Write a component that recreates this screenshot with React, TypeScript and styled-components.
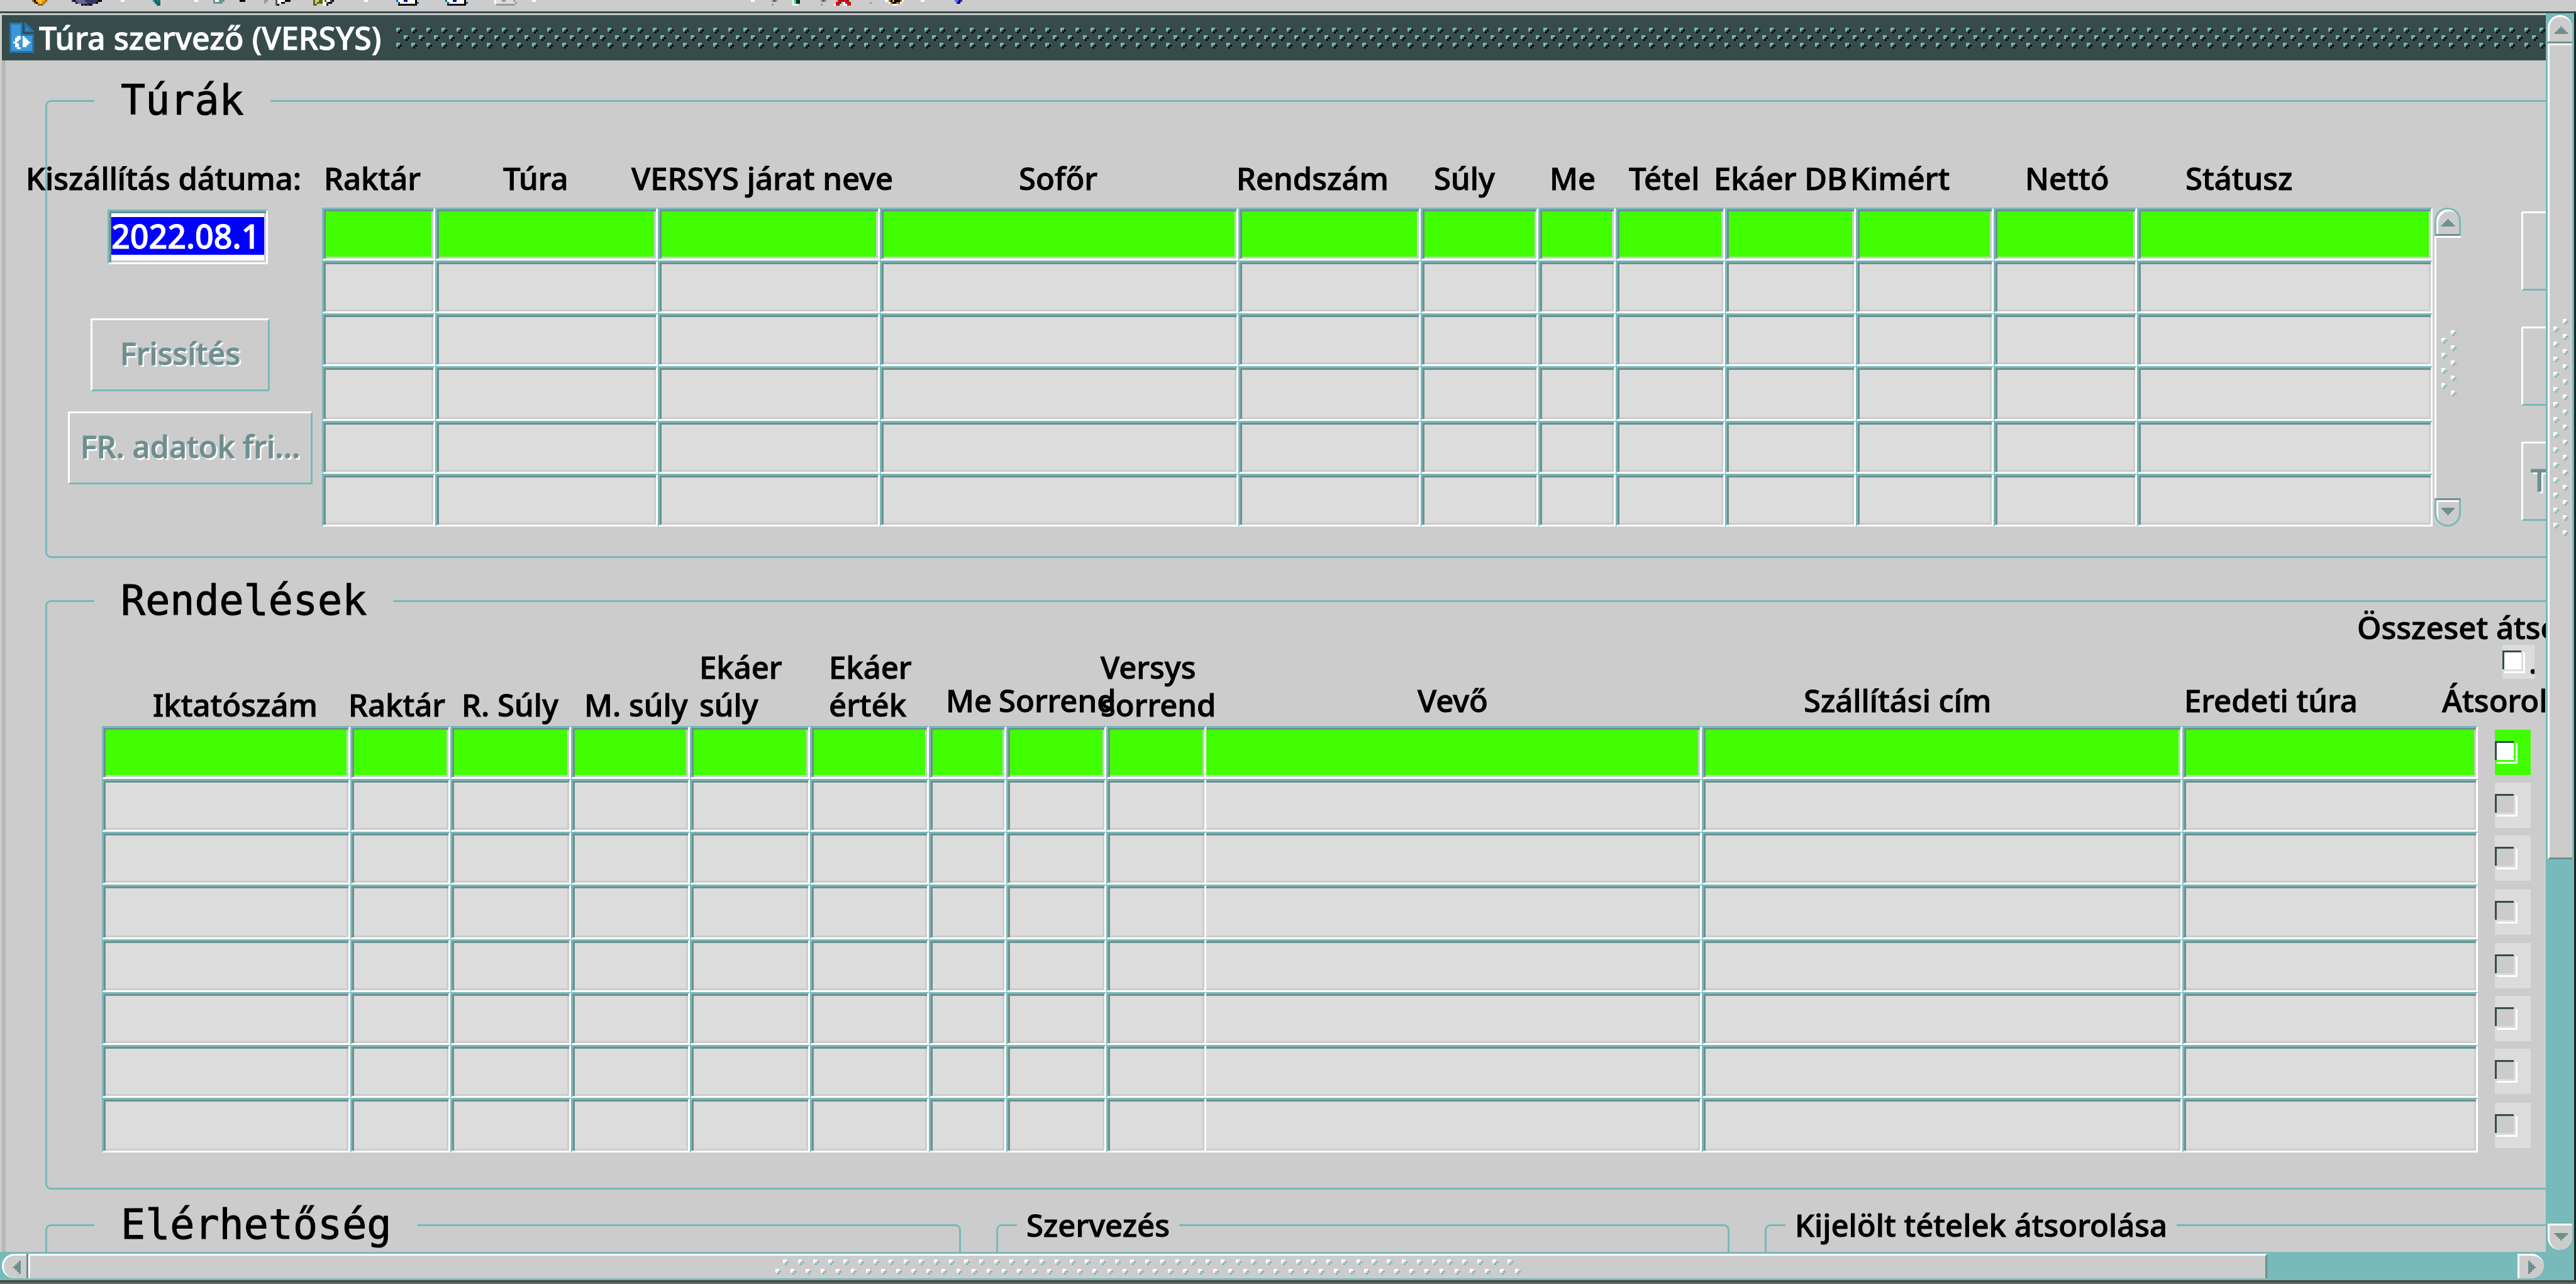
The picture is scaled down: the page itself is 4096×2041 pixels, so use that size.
import React from "react";
import styled, { createGlobalStyle, css } from "styled-components";

const c = {
  face: "#cccccc",
  field: "#dcdcdc",
  teal: "#78b9b9",
  slate: "#6f8f8f",
  dark: "#374b4b",
  active: "#41ff00",
  edge: "#b7b7b7",
  select: "#0000ff",
};

const sans = `"Noto Sans", "Open Sans", sans-serif`;
const mono = `"DejaVu Sans Mono", monospace`;

const GlobalStyle = createGlobalStyle`
  *, *::before, *::after { box-sizing: border-box; }
  html, body { margin: 0; height: 100%; background: ${c.face}; overflow: hidden; }
  body { font: 500 49px/60px ${sans}; color: #000; -webkit-text-stroke: 1px; }
  button, input { font: inherit; color: inherit; margin: 0; padding: 0; border-radius: 0; }
`;

/* ---------- pixel drawings ---------- */

const palette: Record<string, string> = {
  k: "#000000", w: "#ffffff", o: "#ff9900", y: "#ffcc66", b: "#996600",
  p: "#666699", n: "#333366", t: "#006666", T: "#669999", g: "#999999",
  d: "#555555", l: "#cccc99", m: "#666600", N: "#000099", B: "#006699",
  G: "#00ee33", e: "#003333", r: "#ff0000", R: "#cc0033", u: "#663300",
  v: "#6666ff", s: "#dddddd", c: "#009999",
};

function Sprite({ rows }: { rows: string[] }) {
  const w = Math.max(...rows.map((r) => r.length));
  return (
    <svg width={w * 3} height={rows.length * 3} viewBox={`0 0 ${w} ${rows.length}`} shapeRendering="crispEdges" aria-hidden="true">
      {rows.map((row, y) =>
        row.split("").map((ch, x) =>
          ch === "." ? null : <rect key={`${x}-${y}`} x={x} y={y} width="1" height="1" fill={palette[ch]} />
        )
      )}
    </svg>
  );
}

function Dot({ x, y, light, dark }: { x: number; y: number; light: string; dark: string }) {
  return (
    <g>
      <path d={`M${x} ${y}h6v3h-3v3h-3z`} fill={light} />
      <path d={`M${x + 6} ${y + 3}h3v3h-3zM${x + 3} ${y + 6}h3v3h-3z`} fill={dark} />
    </g>
  );
}

function VerticalGrip({ count }: { count: number }) {
  return (
    <svg width="24" height={count * 24 - 15} shapeRendering="crispEdges" aria-hidden="true">
      {Array.from({ length: count }, (_, i) => (
        <Dot key={`r${i}`} x={15} y={i * 24} light="#fff" dark={c.teal} />
      ))}
      {Array.from({ length: count - 1 }, (_, i) => (
        <Dot key={`l${i}`} x={0} y={12 + i * 24} light="#fff" dark={c.teal} />
      ))}
    </svg>
  );
}

function HorizontalGrip({ count }: { count: number }) {
  return (
    <svg width={count * 24 - 15} height="24" shapeRendering="crispEdges" aria-hidden="true">
      {Array.from({ length: count }, (_, i) => (
        <Dot key={`b${i}`} x={i * 24} y={15} light="#fff" dark={c.teal} />
      ))}
      {Array.from({ length: count - 1 }, (_, i) => (
        <Dot key={`t${i}`} x={12 + i * 24} y={0} light="#fff" dark={c.teal} />
      ))}
    </svg>
  );
}

const arrows = {
  up: { w: 21, h: 12, d: "M9 0h3v3h3v3h3v3h3v3h-21v-3h3v-3h3v-3h3z" },
  down: { w: 21, h: 12, d: "M0 0h21v3h-3v3h-3v3h-3v3h-3v-3h-3v-3h-3v-3h-3z" },
  left: { w: 12, h: 21, d: "M12 0v21h-3v-3h-3v-3h-3v-3h-3v-3h3v-3h3v-3h3v-3z" },
  right: { w: 12, h: 21, d: "M0 0v21h3v-3h3v-3h3v-3h3v-3h-3v-3h-3v-3h-3v-3z" },
};

function Arrow({ dir }: { dir: keyof typeof arrows }) {
  const a = arrows[dir];
  return (
    <svg width={a.w} height={a.h} shapeRendering="crispEdges" aria-hidden="true">
      <path d={a.d} fill={c.slate} />
    </svg>
  );
}

/* ---------- window frame ---------- */

const Window = styled.div`
  display: flex;
  flex-direction: column;
  height: 100vh;
  overflow: hidden;
  background: ${c.face};
`;

const Toolbar = styled.div`
  display: flex;
  flex: none;
  align-items: flex-start;
  height: 21px;
  padding-left: 51px;
  border-bottom: 3px solid ${c.dark};
`;

const Tool = styled.button<{ $gap: number }>`
  display: flex;
  flex: none;
  margin-left: ${(p) => p.$gap}px;
  border: 0;
  background: none;
`;

const Middle = styled.div`
  display: flex;
  flex: 1;
  min-height: 0;
`;

const Main = styled.div`
  display: flex;
  flex: 1;
  flex-direction: column;
  min-width: 0;
`;

const TitleBar = styled.header`
  display: flex;
  flex: none;
  align-items: center;
  height: 75px;
  padding-left: 12px;
  margin-left: 3px;
  border-top: 3px solid ${c.face};
  background: ${c.dark};
  color: #fff;
`;

const Title = styled.h1`
  margin: 0 24px 0 8px;
  font: inherit;
  font-size: 50px;
  white-space: nowrap;
`;

const TitleGrip = styled.svg`
  flex: 1;
  height: 33px;
`;

const Workspace = styled.main`
  flex: 1;
  min-height: 0;
  margin-left: 3px;
  border-left: 6px solid ${c.edge};
  overflow: hidden;
`;

const Form = styled.form`
  width: calc(100% + 228px);
  padding: 43px 0 0 63px;
`;

const Group = styled.fieldset<{ $top?: number; $bottom?: number }>`
  min-width: 0;
  margin: ${(p) => p.$top ?? 0}px 0 0;
  padding: 0 0 ${(p) => p.$bottom ?? 0}px;
  border: 3px solid ${c.teal};
  border-radius: 9px;
`;

const Legend = styled.legend<{ $mono?: boolean }>`
  line-height: 42px;
  white-space: nowrap;
  ${(p) =>
    p.$mono
      ? css`
          margin-left: 75px;
          padding: 0 42px;
          font-family: ${mono};
          font-size: 65px;
          font-weight: 400;
        `
      : css`
          margin-left: 30px;
          padding: 0 15px;
        `}
`;

const bevel = css`
  border: 3px solid;
  border-color: ${c.teal} #fff #fff ${c.teal};
  box-shadow: inset 3px 3px ${c.slate}, inset -3px -3px ${c.face};
  outline: none;
`;

/* ---------- tour panel ---------- */

const TourLayout = styled.div`
  display: flex;
  align-items: flex-start;
  padding-right: 24px;
`;

const DatePanel = styled.div`
  display: flex;
  flex: none;
  flex-direction: column;
  align-items: flex-start;
  width: 437px;
  padding-top: 72px;
`;

const DateLabel = styled.label`
  margin-left: -34px;
  white-space: nowrap;
`;

const DateField = styled.input`
  ${bevel}
  width: 255px;
  height: 87px;
  margin: 20px 0 86px 96px;
  padding: 0 0 4px 3px;
  background: linear-gradient(${c.select}, ${c.select}) 3px 9px / 243px 60px no-repeat #fff;
  color: #fff;
  font-size: 52px;
`;

const PushButton = styled.button<{ $width: number; $indent?: number; $start?: boolean }>`
  flex: none;
  width: ${(p) => p.$width}px;
  height: 116px;
  margin-left: ${(p) => p.$indent ?? 0}px;
  padding: 0 12px 6px;
  border: 3px solid;
  border-color: #fff ${c.teal} ${c.teal} #fff;
  border-radius: 3px;
  background: ${c.face};
  color: ${c.slate};
  text-align: ${(p) => (p.$start ? "left" : "center")};
  text-shadow: 3px 3px #fff;
  white-space: nowrap;
`;

const ButtonStack = styled.div`
  display: flex;
  flex-direction: column;
  gap: 32px;
`;

const SidePanel = styled.div`
  display: flex;
  flex: none;
  flex-direction: column;
  gap: 57px;
  padding: 155px 0 0 96px;

  button { height: 126px; }
`;

/* ---------- record grids ---------- */

const Grid = styled.table`
  flex: 1;
  width: 100%;
  min-width: 0;
  table-layout: fixed;
  border-collapse: separate;
  border-spacing: 0;
`;

const Head = styled.th<{ $top?: number; $lift: number }>`
  padding: ${(p) => p.$top ?? 0}px 0 ${(p) => p.$lift}px;
  font-weight: inherit;
  text-align: left;
  vertical-align: bottom;
  white-space: pre;
`;

const HeadText = styled.div<{ $indent: number }>`
  margin-left: ${(p) => p.$indent}px;
`;

const Row = styled.tr`
  height: 84px;

  &:nth-child(4n) { height: 87px; }
`;

const Cell = styled.td`
  height: inherit;
  padding: 0;
`;

const Field = styled.input<{ $active: boolean; $open?: boolean }>`
  ${bevel}
  display: block;
  width: 100%;
  height: 84px;
  padding: 0 6px;
  background: ${(p) => (p.$active ? c.active : c.field)};

  ${(p) =>
    p.$open &&
    css`
      border-left-width: 0;
      box-shadow: inset 0 3px ${c.slate}, inset -3px -3px ${c.face};
    `}

  tr:nth-child(4n) & { height: 87px; }
`;

const TickArea = styled.div<{ $active?: boolean; $header?: boolean }>`
  display: flex;
  align-items: center;
  justify-content: space-between;
  width: ${(p) => (p.$header ? 51 : 57)}px;
  height: ${(p) => (p.$header ? 54 : 72)}px;
  margin: ${(p) => (p.$header ? "7px 0 4px 39px" : "0 0 0 27px")};
  background: ${(p) => (p.$active ? c.active : c.field)};
  overflow: hidden;
`;

const Tick = styled.input<{ $fill: string }>`
  flex: none;
  appearance: none;
  width: 36px;
  height: 36px;
  background:
    linear-gradient(${c.dark}, ${c.dark}) 0 0 / 30px 3px no-repeat,
    linear-gradient(${c.dark}, ${c.dark}) 0 0 / 3px 30px no-repeat,
    linear-gradient(#fff, #fff) 33px 3px / 3px 33px no-repeat,
    linear-gradient(#fff, #fff) 3px 33px / 33px 3px no-repeat,
    linear-gradient(${(p) => p.$fill}, ${(p) => p.$fill}) 3px 3px / 27px 27px no-repeat;
`;

const TickLabel = styled.label`
  width: 9px;
  line-height: 54px;
  overflow: hidden;
`;

const AllLabel = styled.label`
  display: block;
  margin-left: -192px;
  line-height: 42px;
`;

const OrderLayout = styled.div`
  padding-left: 87px;
`;

const BottomGroups = styled.div`
  display: flex;
  gap: 56px;
  margin-top: 35px;
  height: 240px;
`;

const BottomGroup = styled(Group)<{ $width?: number }>`
  flex: ${(p) => (p.$width ? `0 0 ${p.$width}px` : "1")};
`;

/* ---------- scroll bars ---------- */

const ScrollButton = styled.button<{ $dir: keyof typeof arrows }>`
  display: flex;
  flex: none;
  align-items: center;
  justify-content: center;
  background: ${c.face};
  border: 0 solid #fff;

  ${(p) => p.$dir === "up" && css`height: 42px; padding-top: 3px; border-width: 3px 0 0 3px; border-radius: 21px 21px 0 0;`}
  ${(p) => p.$dir === "down" && css`height: 42px; padding-bottom: 3px; border-width: 3px 0 0 3px; border-radius: 0 0 21px 21px;`}
  ${(p) => p.$dir === "left" && css`width: 39px; padding-left: 6px; border-width: 3px 0 0 3px; border-radius: 21px 0 0 21px;`}
  ${(p) => p.$dir === "right" && css`width: 42px; border-width: 3px 0 0 3px; border-radius: 0 21px 21px 0;`}
`;

const ListScroll = styled.div`
  display: flex;
  flex: none;
  flex-direction: column;
  width: 42px;
  height: 507px;
  margin: 149px 0 0 3px;

  button { height: 45px; border: 3px solid ${c.teal}; }
  button:first-child { border-bottom-color: ${c.slate}; box-shadow: inset 3px 3px #fff; }
  button:last-child { border-top-color: ${c.slate}; box-shadow: inset 3px 3px #fff; }
`;

const ListTrack = styled.div`
  display: flex;
  flex: 1;
  align-items: center;
  justify-content: center;
  padding-bottom: 15px;
  border-left: 3px solid #fff;
  border-top: 3px solid #fff;
`;

const VScroll = styled.div`
  display: flex;
  flex: none;
  flex-direction: column;
  width: 48px;
  padding: 3px 3px 3px 3px;
  border-right: 3px solid #1c2222;
  background: ${c.teal};
`;

const VTrack = styled.div`
  display: flex;
  flex: 1;
  flex-direction: column;
`;

const VThumb = styled.div`
  display: flex;
  flex: 433;
  justify-content: center;
  border: solid;
  border-width: 3px 0 3px 3px;
  border-color: #fff ${c.slate} ${c.slate} #fff;
  background: ${c.face};

  svg { margin-top: 435px; }
`;

const VRest = styled.div`
  flex: 194;
`;

const UpEdge = styled.div`
  height: 3px;
  background: ${c.slate};
`;

const HScroll = styled.div`
  display: flex;
  flex: none;
  height: 45px;
  padding: 3px 48px 3px 3px;
  border-right: 3px solid #1c2222;
  background: ${c.teal};
`;

const HThumb = styled.div`
  display: flex;
  flex: 1188;
  align-items: center;
  justify-content: center;
  border: solid;
  border-width: 3px 3px 0 3px;
  border-color: #fff ${c.slate} #fff #fff;
  background: ${c.face};
`;

const LeftEdge = styled.div`
  width: 3px;
  background: ${c.slate};
`;

const HRest = styled.div`
  flex: 133;
`;

const BottomEdge = styled.footer`
  flex: none;
  height: 6px;
  border-top: 3px solid ${c.dark};
  background: #666;
`;

/* ---------- data ---------- */

const tools: { x: number; name: string; rows: string[] }[] = [
  { x: 17, name: "Mentés", rows: ["bkoyyoob", ".bkoyob.", "...bbb.."] },
  { x: 38, name: "Nyomtatás", rows: ["nkpppppnnnnnnnkk", "..kpppppnnnnnk..", ".....knknkk....."] },
  { x: 64, name: "Elválasztó", rows: ["ww"] },
  { x: 81, name: "Kilépés", rows: ["ctcd", ".ttd", "..tt"] },
  { x: 103, name: "Elválasztó", rows: ["ww"] },
  { x: 113, name: "Kivágás", rows: ["TwwTTT", "TTTTT."] },
  { x: 127, name: "Másolás", rows: ["kkk"] },
  { x: 140, name: "Beillesztés", rows: ["gg", "g."] },
  { x: 146, name: "Keresés", rows: ["dwwwwkkk", "dwwkk...", "dk......"] },
  { x: 166, name: "Lekérdezés", rows: ["mllmmwdwwdk", "mlmmmwwdkk.", "mm...wwk..."] },
  { x: 193, name: "Elválasztó", rows: ["ww"] },
  { x: 210, name: "Előző", rows: ["BwwwNNwwwwk", ".BwwwwwwwwkB", ".kkkkkkkkkk"] },
  { x: 236, name: "Következő", rows: ["BwwwNNwwwwk", ".BwwwwwwwwkB", ".kkkkkkkkkk"] },
  { x: 262, name: "Utolsó", rows: ["wsssggssssg", "wssssssssssg", ".gggggggggg"] },
  { x: 282, name: "Elválasztó", rows: ["ww"] },
  { x: 398, name: "Elválasztó", rows: ["ww"] },
  { x: 409, name: "Rekord", rows: ["gdg", "...", "g.."] },
  { x: 420, name: "Új rekord", rows: ["wGee", "wGee", "www."] },
  { x: 435, name: "Rekord", rows: ["gdg", "...", "g.."] },
  { x: 442, name: "Törlés", rows: ["..rRurRu.", ".rRu.wRru", "wru..wwRr"] },
  { x: 461, name: "Rekord", rows: [".", "g"] },
  { x: 469, name: "Zárolás", rows: ["wwbkokkkbw", "..wbkkbbw.", "....www..."] },
  { x: 488, name: "Elválasztó", rows: ["ww"] },
  { x: 506, name: "Súgó", rows: ["vvNn", ".NN."] },
];

type Column = { label: string; width: number; indent: number; high?: boolean; open?: boolean };

const tourColumns: Column[] = [
  { label: "Raktár", width: 180, indent: 3 },
  { label: "Túra", width: 354, indent: 108 },
  { label: "VERSYS járat neve", width: 353, indent: -42 },
  { label: "Sofőr", width: 570, indent: 221 },
  { label: "Rendszám", width: 290, indent: -3 },
  { label: "Súly", width: 187, indent: 21 },
  { label: "Me", width: 123, indent: 18 },
  { label: "Tétel", width: 174, indent: 21 },
  { label: "Ekáer DB", width: 208, indent: -18 },
  { label: "Kimért", width: 219, indent: -9 },
  { label: "Nettó", width: 228, indent: 50 },
  { label: "Státusz", width: 470, indent: 77 },
];

const orderColumns: Column[] = [
  { label: "Iktatószám", width: 395, indent: 81 },
  { label: "Raktár", width: 159, indent: -3 },
  { label: "R. Súly", width: 192, indent: 18 },
  { label: "M. súly", width: 189, indent: 21 },
  { label: "Ekáer\nsúly", width: 191, indent: 15 },
  { label: "Ekáer\nérték", width: 189, indent: 30 },
  { label: "Me", width: 123, indent: 27, high: true },
  { label: "Sorrend", width: 159, indent: -12, high: true },
  { label: "Versys\nsorrend", width: 159, indent: -9 },
  { label: "Vevő", width: 788, indent: 336, high: true, open: true },
  { label: "Szállítási cím", width: 764, indent: 162, high: true },
  { label: "Eredeti túra", width: 470, indent: 3, high: true },
];

function Cells({ columns, active, row }: { columns: Column[]; active: boolean; row: number }) {
  return (
    <>
      {columns.map((col) => (
        <Cell key={col.label}>
          <Field type="text" $active={active} $open={col.open} aria-label={`${col.label} ${row + 1}`} />
        </Cell>
      ))}
    </>
  );
}

function TourGrid() {
  return (
    <Grid aria-label="Túrák">
      <colgroup>
        {tourColumns.map((col) => (
          <col key={col.label} style={{ width: col.width }} />
        ))}
      </colgroup>
      <thead>
        <tr>
          {tourColumns.map((col) => (
            <Head key={col.label} $top={72} $lift={17} scope="col">
              <HeadText $indent={col.indent}>{col.label}</HeadText>
            </Head>
          ))}
        </tr>
      </thead>
      <tbody>
        {Array.from({ length: 6 }, (_, row) => (
          <Row key={row}>
            <Cells columns={tourColumns} active={row === 0} row={row} />
          </Row>
        ))}
      </tbody>
    </Grid>
  );
}

function OrderGrid() {
  return (
    <Grid aria-label="Rendelések">
      <colgroup>
        {orderColumns.map((col) => (
          <col key={col.label} style={{ width: col.width }} />
        ))}
        <col />
      </colgroup>
      <thead>
        <tr>
          {orderColumns.map((col) => (
            <Head key={col.label} $lift={col.high ? 11 : 4} scope="col">
              <HeadText $indent={col.indent}>{col.label}</HeadText>
            </Head>
          ))}
          <Head $lift={11} scope="col">
            <AllLabel htmlFor="move-all">Összeset átsorol</AllLabel>
            <TickArea $header>
              <Tick type="checkbox" id="move-all" $fill="#fff" />
              <TickLabel htmlFor="move-all">.</TickLabel>
            </TickArea>
            <HeadText $indent={-57}>Átsorol</HeadText>
          </Head>
        </tr>
      </thead>
      <tbody>
        {Array.from({ length: 8 }, (_, row) => (
          <Row key={row}>
            <Cells columns={orderColumns} active={row === 0} row={row} />
            <Cell>
              <TickArea $active={row === 0}>
                <Tick type="checkbox" $fill={row === 0 ? "#fff" : c.face} aria-label={`Átsorol ${row + 1}`} />
              </TickArea>
            </Cell>
          </Row>
        ))}
      </tbody>
    </Grid>
  );
}

function DocumentIcon() {
  return (
    <svg width="39" height="48" viewBox="0 0 13 16" shapeRendering="crispEdges" aria-hidden="true">
      <path d="M0 0h7v6h6v10H0z" fill="#2476ae" />
      <path d="M1 1h5v6h6v8H1z" fill="#3b99d9" />
      <path d="M8 0h1v1h1v1h1v1h1v1h1v1H8z" fill="#2476ae" />
      <path d="M9 3h1v1H9z" fill="#3b99d9" />
      <path d="M4 7h2v2H5v1H4v1h1v2h1v1H4v-1H3v-2H2v-1h1V8h1z" fill="#fff" />
      <path d="M7 7h1v1h1v1h1v1h1v1h-1v1H9v1H7z" fill="#fff" />
    </svg>
  );
}

export default function App() {
  let cursor = 17;
  return (
    <Window>
      <GlobalStyle />
      <Toolbar role="toolbar">
        {tools.map((tool) => {
          const gap = (tool.x - cursor) * 3;
          cursor = tool.x + Math.max(...tool.rows.map((r) => r.length));
          return (
            <Tool key={tool.x} type="button" aria-label={tool.name} $gap={gap}>
              <Sprite rows={tool.rows} />
            </Tool>
          );
        })}
      </Toolbar>

      <Middle>
        <Main>
          <TitleBar>
            <DocumentIcon />
            <Title>Túra szervező (VERSYS)</Title>
            <TitleGrip shapeRendering="crispEdges" aria-hidden="true">
              <defs>
                <pattern id="title-dots" width="24" height="24" patternUnits="userSpaceOnUse">
                  <Dot x={0} y={0} light={c.teal} dark="#000" />
                  <Dot x={12} y={12} light={c.teal} dark="#000" />
                </pattern>
              </defs>
              <rect width="100%" height="33" fill="url(#title-dots)" />
            </TitleGrip>
          </TitleBar>

          <Workspace>
            <Form>
              <Group $bottom={47}>
                <Legend $mono>Túrák</Legend>
                <TourLayout>
                  <DatePanel>
                    <DateLabel htmlFor="ship-date">Kiszállítás dátuma:</DateLabel>
                    <DateField id="ship-date" type="text" defaultValue="2022.08.1" />
                    <ButtonStack>
                      <PushButton type="button" $width={285} $indent={69}>Frissítés</PushButton>
                      <PushButton type="button" $width={389} $indent={33}>FR. adatok fri...</PushButton>
                    </ButtonStack>
                  </DatePanel>
                  <TourGrid />
                  <ListScroll>
                    <ScrollButton type="button" $dir="up" aria-label="Fel"><Arrow dir="up" /></ScrollButton>
                    <ListTrack><VerticalGrip count={5} /></ListTrack>
                    <ScrollButton type="button" $dir="down" aria-label="Le"><Arrow dir="down" /></ScrollButton>
                  </ListScroll>
                  <SidePanel>
                    <PushButton type="button" $width={240} aria-label="Művelet 1" />
                    <PushButton type="button" $width={240} aria-label="Művelet 2" />
                    <PushButton type="button" $width={240} $start>T</PushButton>
                  </SidePanel>
                </TourLayout>
              </Group>

              <Group $top={47} $bottom={56}>
                <Legend $mono>Rendelések</Legend>
                <OrderLayout>
                  <OrderGrid />
                </OrderLayout>
              </Group>

              <BottomGroups>
                <BottomGroup $width={1456}><Legend $mono>Elérhetőség</Legend></BottomGroup>
                <BottomGroup $width={1166}><Legend>Szervezés</Legend></BottomGroup>
                <BottomGroup><Legend>Kijelölt tételek átsorolása</Legend></BottomGroup>
              </BottomGroups>
            </Form>
          </Workspace>
        </Main>

        <VScroll>
          <ScrollButton type="button" $dir="up" aria-label="Görgetés fel"><Arrow dir="up" /></ScrollButton>
          <VTrack>
            <UpEdge />
            <VThumb><VerticalGrip count={15} /></VThumb>
            <VRest />
          </VTrack>
          <ScrollButton type="button" $dir="down" aria-label="Görgetés le"><Arrow dir="down" /></ScrollButton>
        </VScroll>
      </Middle>

      <HScroll>
        <ScrollButton type="button" $dir="left" aria-label="Görgetés balra"><Arrow dir="left" /></ScrollButton>
        <LeftEdge />
        <HThumb><HorizontalGrip count={50} /></HThumb>
        <HRest />
        <ScrollButton type="button" $dir="right" aria-label="Görgetés jobbra"><Arrow dir="right" /></ScrollButton>
      </HScroll>
      <BottomEdge />
    </Window>
  );
}
